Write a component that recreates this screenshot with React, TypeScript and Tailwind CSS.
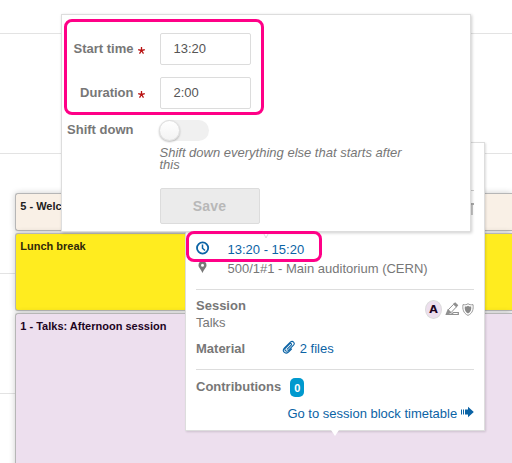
import React from "react";

function Clock() {
  return (
    <svg width="14" height="14" viewBox="0 0 14 14" fill="none" stroke="#0b63a5" strokeWidth="1.8">
      <circle cx="6.600" cy="7" r="5.600" />
      <path d="M6.500 3.500v3.700l2.500 2.300" strokeWidth="1.500" />
    </svg>
  );
}

function Pin() {
  return (
    <svg width="10" height="13" viewBox="0 0 10 13" fill="#777">
      <path fillRule="evenodd" d="M4.500 .2a4 4 0 0 0-4 4C.5 6.700 3 8 4.500 12 6 8 8.500 6.700 8.500 4.200a4 4 0 0 0-4-4Zm0 2.500a1.500 1.500 0 1 1 0 3 1.500 1.500 0 0 1 0-3Z" />
    </svg>
  );
}

function Paperclip() {
  return (
    <svg width="14" height="14" viewBox="0 0 14 14" fill="none" stroke="#0b63a5" strokeWidth="1.100" strokeLinecap="round" strokeLinejoin="round">
      <path d="M5.200 9.200 9.200 5.200c1-1.200-.5-2.300-1.500-1.400L3.500 8c-1.700 2 .6 4.300 2.600 2.600L11.500 5.200c2-2.300-.8-5-3.200-3L2.500 7.800c-3 3.200.6 7 4 4.200L9.500 9" />
    </svg>
  );
}

function Pencil() {
  return (
    <svg width="14" height="14" viewBox="0 0 14 14" fill="none" stroke="#909090">
      <path d="M3.200 7.800 8.700 2.200 11.500 4.800 6 10.600Z" strokeWidth="1" />
      <path d="M8 2 10.200 .2 13.300 3.200 11.500 5.300Z M2.800 7 6.800 11 .3 13Z" fill="#909090" stroke="none" />
      <path d="M1 12.500h12.300V10.500H8.500L6.500 12" strokeWidth="1.200" />
    </svg>
  );
}

function Shield() {
  return (
    <svg width="12" height="13" viewBox="0 0 12 13">
      <path d="M6 .7C4.800 1.700 3 2 1 1.600 .4 6 1.200 10.200 6 12.400 10.800 10.200 11.600 6 11 1.600 9 2 7.200 1.700 6 .7Z" fill="#fff" stroke="#999" />
      <path d="M6 2.700C5.100 3.400 4 3.600 2.800 3.500 2.500 6.500 3 9 6 10.600 9 9 9.500 6.500 9.200 3.500 8 3.600 6.900 3.400 6 2.700Z" fill="#888" />
    </svg>
  );
}

function Arrow() {
  return (
    <svg width="14" height="12" viewBox="0 0 14 12" fill="#0b63a5">
      <path d="M1 3.500h1v5H1zM3 3.500h1v5H3zM5 3.500h3V.8L13.800 6 8 11.200V8.500H5z" />
    </svg>
  );
}

function Field({ label, value }: { label: string; value: string }) {
  return (
    <div className="flex h-8 items-center">
      <div className="w-[71.500px] text-right font-bold">{label}</div>
      <svg className="ml-[3.500px] mt-[3px] h-[9px] w-[9px]" viewBox="0 0 9 9" stroke="#b81111" strokeWidth="1.300">
        <path d="M4.500 4.500V1M4.500 4.500 1.200 3.600M4.500 4.500 7.800 3.600M4.500 4.500 2.500 7.600M4.500 4.500 6.500 7.600" />
      </svg>
      <div className="ml-[14px] flex h-8 w-[91px] items-center rounded-[2px] border border-[#dcdcdc] pl-[12.500px] text-[#555]">
        {value}
      </div>
    </div>
  );
}

export default function App() {
  return (
    <div className="relative grid h-[463px] w-[512px] overflow-hidden bg-white font-['Liberation_Sans',Arial,sans-serif] text-[13px] leading-4 text-[#777]">
      <div className="pt-[33px] [grid-area:1/1]">
        <div className="h-[120px] border-t border-[#e3e3e3]" />
        <div className="h-[120px] border-t border-[#e3e3e3]" />
        <div className="h-[120px] border-t border-[#e3e3e3]" />
        <div className="h-[70px] border-t border-[#e3e3e3]" />
      </div>

      <div className="ml-[15px] flex flex-col gap-[2px] overflow-visible pt-[193px] text-[11px] font-bold leading-[14px] [grid-area:1/1]">
        <div className="h-[38px] shrink-0 rounded-l-[3px] border border-r-0 border-[#b6b6b6] bg-[#f9f0e6] pl-[4.300px] pt-[5px] text-[#202020] shadow-[0_0_6px_#0003]">5 - Welcome</div>
        <div className="h-[78px] shrink-0 rounded-l-[3px] border border-r-0 border-[#b6b6b6] bg-[#ffec1f] pl-[4.300px] pt-[5px] text-[#30290a] shadow-[0_0_6px_#0003]">Lunch break</div>
        <div className="h-[160px] shrink-0 rounded-l-[3px] border border-r-0 border-[#b6b6b6] bg-[#eddfee] pl-[4.300px] pt-[5px] text-[#1d041f] shadow-[0_0_6px_#0003]">1 - Talks: Afternoon session</div>
      </div>

      {/* Session block details */}
      <div className="absolute left-[185px] top-[142px] h-[289px] w-[300px] border border-[#ddd] bg-white px-[10px] shadow-[1px_1px_2px_#0002]">
        <div className="flex h-[98px] flex-col items-end pt-[47px]">
          <div className="w-3 border-t border-[#ccc]" />
          <div className="mt-[12px] h-[2px] w-[3px] bg-[#aaa]" />
          <div className="mr-px h-[10px] w-[2px] bg-[#c8c8c8]" />
        </div>
        <div className="flex h-[19px] items-center text-[#0b63a5]">
          <div className="-mt-[5px] w-[31.500px]"><Clock /></div>
          <div className="-mt-[2px]">13:20 - 15:20</div>
        </div>
        <div className="flex h-[28px] items-start pt-[1px]">
          <div className="w-[31.500px] pl-[2px]"><Pin /></div>
          <div>500/1#1 - Main auditorium (CERN)</div>
        </div>
        <div className="mt-px border-t border-[#ddd]" />
        <div className="flex h-[42px] justify-between pt-2">
          <div><div className="font-bold leading-4">Session</div><div className="leading-[17px]">Talks</div></div>
          <div className="flex items-start">
            <div className="mt-[2px] flex h-[19px] w-[17px] items-center justify-center rounded-[50%] border border-[#dcdcdc] bg-[#eddfee] text-[11px] font-bold text-[#1d041f] font-['DejaVu_Sans',sans-serif]">A</div>
            <div className="ml-[3px] mt-[4px]"><Pencil /></div>
            <div className="ml-[3px] mt-[5px]"><Shield /></div>
          </div>
        </div>
        <div className="flex h-[37px] pt-[9px]">
          <div className="w-[86px] font-bold">Material</div>
          <div className="-mt-[1px] w-[17.700px]"><Paperclip /></div>
          <div className="text-[#0b63a5]">2 files</div>
        </div>
        <div className="border-t border-[#ddd]" />
        <div className="flex pt-[8px]">
          <div className="pt-px font-bold">Contributions</div>
          <div className="ml-[9px] flex h-[19px] w-[14px] items-center justify-center rounded-[5px] bg-[#0099ce] text-[11px] font-bold text-white">0</div>
        </div>
        <div className="mt-[9px] flex justify-end text-[#0b63a5]">
          <span>Go to session block timetable</span>
          <span className="ml-[2.800px]"><Arrow /></span>
        </div>
        <svg className="absolute left-[144px] top-[287px]" width="10" height="7" viewBox="0 0 10 7"><path d="M1 0h8L5 6Z" fill="#fff" /></svg>
      </div>

      {/* Time editing form */}
      <div className="absolute left-[61px] top-[14px] h-[218px] w-[410px] border border-[#ddd] bg-white pt-[18px] shadow-[1px_1px_3px_#0003]">
        <Field label="Start time" value="13:20" />
        <div className="mt-3"><Field label="Duration" value="2:00" /></div>
        <div className="mt-[11px] flex h-[21px] items-center">
          <div className="-mt-[1px] w-[71.500px] whitespace-nowrap text-right font-bold">Shift down</div>
          <div className="ml-[25.500px] h-[21px] w-[50px] rounded-full bg-[#f0f0f0]">
            <div className="h-[21px] w-[21px] rounded-full border border-[#ddd] bg-gradient-to-b from-white to-[#f3f3f3] shadow-[0_1px_2px_#0004]" />
          </div>
        </div>
        <div className="ml-[97.500px] mt-[6px] w-[260px] italic leading-[12px]">Shift down everything else that starts after this</div>
        <div className="ml-[98px] mt-[17px] flex h-9 w-[100px] items-center justify-center rounded-[2px] border border-[#dcdcdc] bg-[#ebebeb] pr-px text-[14px] font-bold tracking-[0.2px] text-[#b8b8b8]">Save</div>
        <svg className="absolute left-[197px] top-[216px]" width="14" height="9" viewBox="0 0 14 9"><path d="M5 3l2 4 2-4" fill="#fff" stroke="#ddd" /></svg>
      </div>

      <div className="absolute left-[64px] top-[19px] h-[96px] w-[200px] rounded-[8px] border-[3px] border-[#ff0087]" />
      <div className="absolute left-[186px] top-[231px] h-[31px] w-[136px] rounded-[8px] border-[3px] border-[#ff0087]" />
    </div>
  );
}
